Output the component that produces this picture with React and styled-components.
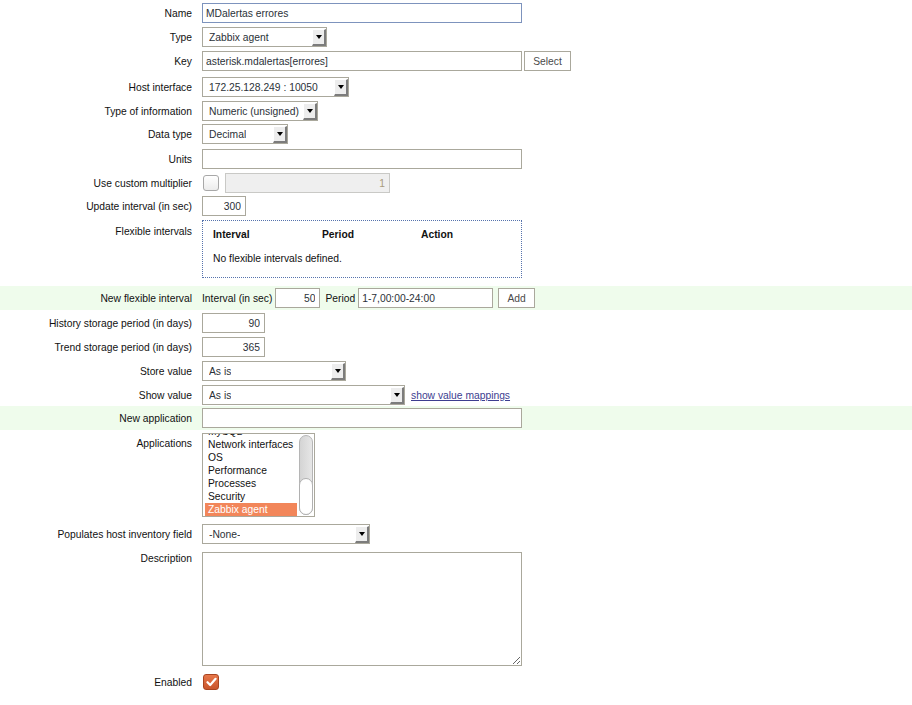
import React from "react";
import styled, { createGlobalStyle, css } from "styled-components";

const Global = createGlobalStyle`
  html, body { margin: 0; padding: 0; background: #fff; }
  body {
    font-family: "Liberation Sans", Arial, sans-serif;
    font-size: 10.3px;
    color: #111;
  }
  * { box-sizing: border-box; }
`;

const Form = styled.div`
  display: flex;
  flex-direction: column;
  padding-top: 1px;
  width: 912px;
`;

const Row = styled.div`
  display: grid;
  grid-template-columns: 192px 1fr;
  column-gap: 10px;
  align-items: ${(p) => (p.$top ? "start" : "center")};
  padding: 2px 0;
  margin-top: ${(p) => p.$mt || 0}px;
  background: ${(p) => (p.$hl ? "#effcec" : "transparent")};
`;

const Label = styled.div`
  text-align: right;
  color: #111;
  white-space: nowrap;
  padding-top: ${(p) => p.$pt || 0}px;
`;

const Field = styled.div`
  display: flex;
  align-items: center;
  gap: ${(p) => (p.$gap != null ? p.$gap : 5)}px;
`;

const inputBase = css`
  height: 20px;
  border: 1px solid #aaa89c;
  background: #fff;
  font-family: "Liberation Sans", Arial, sans-serif;
  font-size: 10.3px;
  color: #2b3138;
  padding: 0 3px;
  outline: none;
  margin: 0;
`;

const TextInput = styled.input`
  ${inputBase};
  width: ${(p) => p.$w}px;
  text-align: ${(p) => (p.$right ? "right" : "left")};
  padding-right: ${(p) => (p.$right ? 4 : 3)}px;
  ${(p) => p.$focus && css`border-color: #7d93bd;`}
  ${(p) =>
    p.$disabled &&
    css`
      background: #efefef;
      border-color: #c9c9c6;
      color: #a89a7c;
    `}
`;

const SelectBox = styled.div`
  ${inputBase};
  width: ${(p) => p.$w}px;
  display: flex;
  align-items: center;
  justify-content: space-between;
  padding: 0 0 0 6px;
`;

const SelectText = styled.span`
  white-space: nowrap;
  overflow: hidden;
`;

const Arrow = styled.span`
  width: 14px;
  height: 17px;
  margin-top: 1px;
  background: #ededed;
  border-right: 2px solid #7c7c7c;
  border-bottom: 2px solid #7c7c7c;
  border-top: 1px solid #fff;
  border-left: 1px solid #fff;
  display: flex;
  align-items: center;
  justify-content: center;
  &::after {
    content: "";
    width: 0;
    height: 0;
    border-left: 3px solid transparent;
    border-right: 3px solid transparent;
    border-top: 4px solid #000;
  }
`;

const Select = ({ w, children }) => (
  <SelectBox $w={w}>
    <SelectText>{children}</SelectText>
    <Arrow />
  </SelectBox>
);

const Button = styled.button`
  height: 20px;
  border: 1px solid #aaa89c;
  background: #fff;
  color: #4a4a4a;
  font-family: "Liberation Sans", Arial, sans-serif;
  font-size: 10.3px;
  padding: 0;
  width: ${(p) => p.$w}px;
  margin: 0 0 0 ${(p) => p.$ml || 0}px;
`;

const Check = styled.span`
  width: 16px;
  height: 16px;
  border-radius: 3px;
  display: inline-flex;
  align-items: center;
  justify-content: center;
  margin-left: 1px;
  ${(p) =>
    p.$checked
      ? css`
          background: linear-gradient(#e7774a, #c9552c);
          border: 1px solid #a94420;
        `
      : css`
          background: linear-gradient(#ffffff, #ececec);
          border: 1px solid #a8a8a8;
        `}
`;

const FlexBox = styled.div`
  width: 320px;
  height: 58px;
  border: 1px dotted #5673ad;
  padding: 7px 10px 0;
`;

const FlexHead = styled.div`
  display: grid;
  grid-template-columns: 109px 99px 1fr;
  font-weight: bold;
  color: #111;
  line-height: 13px;
`;

const FlexEmpty = styled.div`
  margin-top: 11px;
  line-height: 13px;
`;

const InlineText = styled.span`
  color: #111;
  white-space: nowrap;
  margin-left: ${(p) => p.$ml || 0}px;
`;

const ListBox = styled.div`
  width: 113px;
  height: 84px;
  border: 1px solid #aaa89c;
  display: flex;
  overflow: hidden;
  background: #fff;
`;

const ListItems = styled.div`
  flex: 1;
  padding: 0 2px;
  margin-top: -9px;
`;

const ListItem = styled.div`
  height: 13px;
  line-height: 13px;
  padding-left: 3px;
  color: ${(p) => (p.$sel ? "#fff" : "#111")};
  background: ${(p) => (p.$sel ? "#f2865a" : "transparent")};
  white-space: nowrap;
`;

const Track = styled.div`
  width: 14px;
  margin: 1px 1px 1px 0;
  border: 1px solid #b5b5b5;
  border-radius: 7px;
  background: linear-gradient(90deg, #d4d4d4, #e6e6e6);
  display: flex;
  flex-direction: column;
  justify-content: flex-end;
`;

const Thumb = styled.div`
  height: 37px;
  margin: 0 -1px -1px;
  border: 1px solid #b0b0b0;
  border-radius: 7px;
  background: #fff;
`;

const TextArea = styled.textarea`
  width: 320px;
  height: 114px;
  border: 1px solid #aaa89c;
  font-family: "Liberation Sans", Arial, sans-serif;
  font-size: 10.3px;
  margin: 0;
  outline: none;
  display: block;
`;

const Link = styled.a`
  color: #3d3d8f;
  text-decoration: underline;
  white-space: nowrap;
  margin-left: 1px;
`;

const apps = [
  "MySQL",
  "Network interfaces",
  "OS",
  "Performance",
  "Processes",
  "Security",
  "Zabbix agent",
];

export default function App() {
  return (
    <>
      <Global />
      <Form>
        <Row>
          <Label>Name</Label>
          <Field>
            <TextInput $w={320} $focus defaultValue="MDalertas errores" />
          </Field>
        </Row>
        <Row>
          <Label>Type</Label>
          <Field>
            <Select w={125}>Zabbix agent</Select>
          </Field>
        </Row>
        <Row>
          <Label>Key</Label>
          <Field $gap={2}>
            <TextInput $w={320} defaultValue="asterisk.mdalertas[errores]" />
            <Button $w={47}>Select</Button>
          </Field>
        </Row>
        <Row $mt={2}>
          <Label>Host interface</Label>
          <Field>
            <Select w={147}>172.25.128.249 : 10050</Select>
          </Field>
        </Row>
        <Row>
          <Label>Type of information</Label>
          <Field>
            <Select w={116}>Numeric (unsigned)</Select>
          </Field>
        </Row>
        <Row $mt={-1}>
          <Label>Data type</Label>
          <Field>
            <Select w={86}>Decimal</Select>
          </Field>
        </Row>
        <Row $mt={1}>
          <Label>Units</Label>
          <Field>
            <TextInput $w={320} defaultValue="" />
          </Field>
        </Row>
        <Row>
          <Label>Use custom multiplier</Label>
          <Field $gap={6}>
            <Check />
            <TextInput $w={165} $right $disabled defaultValue="1" />
          </Field>
        </Row>
        <Row $mt={-1}>
          <Label>Update interval (in sec)</Label>
          <Field>
            <TextInput $w={44} $right defaultValue="300" />
          </Field>
        </Row>
        <Row $top>
          <Label $pt={6}>Flexible intervals</Label>
          <FlexBox>
            <FlexHead>
              <span>Interval</span>
              <span>Period</span>
              <span>Action</span>
            </FlexHead>
            <FlexEmpty>No flexible intervals defined.</FlexEmpty>
          </FlexBox>
        </Row>
        <Row $hl $mt={6}>
          <Label>New flexible interval</Label>
          <Field $gap={3}>
            <InlineText>Interval (in sec)</InlineText>
            <TextInput $w={45} $right defaultValue="50" />
            <InlineText $ml={2}>Period</InlineText>
            <TextInput $w={135} defaultValue="1-7,00:00-24:00" />
            <Button $w={37} $ml={2}>Add</Button>
          </Field>
        </Row>
        <Row $mt={1}>
          <Label>History storage period (in days)</Label>
          <Field>
            <TextInput $w={63} $right defaultValue="90" />
          </Field>
        </Row>
        <Row>
          <Label>Trend storage period (in days)</Label>
          <Field>
            <TextInput $w={63} $right defaultValue="365" />
          </Field>
        </Row>
        <Row>
          <Label>Store value</Label>
          <Field>
            <Select w={144}>As is</Select>
          </Field>
        </Row>
        <Row>
          <Label>Show value</Label>
          <Field $gap={5}>
            <Select w={203}>As is</Select>
            <Link href="#">show value mappings</Link>
          </Field>
        </Row>
        <Row $hl $mt={-1}>
          <Label>New application</Label>
          <Field>
            <TextInput $w={320} defaultValue="" />
          </Field>
        </Row>
        <Row $top $mt={1}>
          <Label $pt={5}>Applications</Label>
          <ListBox>
            <ListItems>
              {apps.map((a) => (
                <ListItem key={a} $sel={a === "Zabbix agent"}>
                  {a}
                </ListItem>
              ))}
            </ListItems>
            <Track>
              <Thumb />
            </Track>
          </ListBox>
        </Row>
        <Row $mt={3}>
          <Label>Populates host inventory field</Label>
          <Field>
            <Select w={168}>-None-</Select>
          </Field>
        </Row>
        <Row $top $mt={4}>
          <Label $pt={1}>Description</Label>
          <TextArea />
        </Row>
        <Row $mt={4}>
          <Label>Enabled</Label>
          <Field>
            <Check $checked>
              <svg width="11" height="10" viewBox="0 0 11 10">
                <path
                  d="M1.5 5.2 L4.2 8 L9.6 1.8"
                  fill="none"
                  stroke="#fff"
                  strokeWidth="2.2"
                  strokeLinecap="round"
                  strokeLinejoin="round"
                />
              </svg>
            </Check>
          </Field>
        </Row>
      </Form>
    </>
  );
}
